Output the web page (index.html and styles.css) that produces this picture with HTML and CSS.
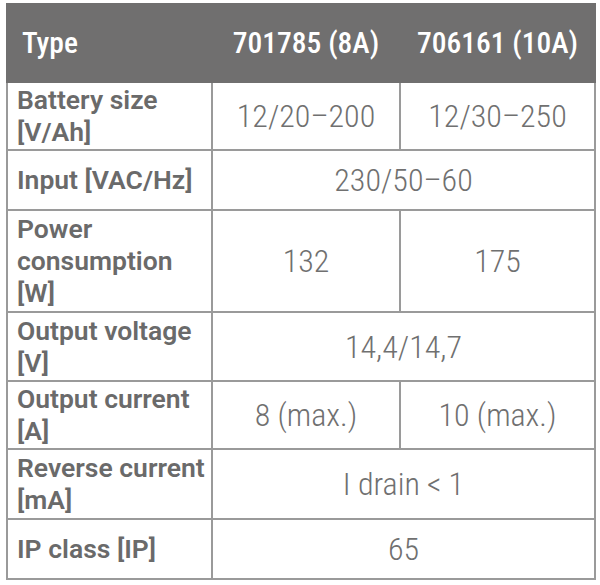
FILE: index.html
```html
<!DOCTYPE html>
<html>
<head>
<meta charset="utf-8">
<link rel="stylesheet" href="styles.css">
</head>
<body>
<table class="spec">
  <colgroup>
    <col class="c1"><col class="c2"><col class="c3">
  </colgroup>
  <thead>
    <tr class="r-head">
      <th class="lbl">Type</th>
      <th>701785 (8A)</th>
      <th>706161 (10A)</th>
    </tr>
  </thead>
  <tbody>
    <tr class="r-battery">
      <td class="lbl">Battery size<br>[V/Ah]</td>
      <td>12/20–200</td>
      <td>12/30–250</td>
    </tr>
    <tr class="r-input">
      <td class="lbl">Input [VAC/Hz]</td>
      <td colspan="2">230/50–60</td>
    </tr>
    <tr class="r-power">
      <td class="lbl">Power<br>consumption<br>[W]</td>
      <td>132</td>
      <td>175</td>
    </tr>
    <tr class="r-voltage">
      <td class="lbl">Output voltage<br>[V]</td>
      <td colspan="2">14,4/14,7</td>
    </tr>
    <tr class="r-current">
      <td class="lbl">Output current<br>[A]</td>
      <td>8 (max.)</td>
      <td>10 (max.)</td>
    </tr>
    <tr class="r-reverse">
      <td class="lbl">Reverse current<br>[mA]</td>
      <td colspan="2">I drain &lt; 1</td>
    </tr>
    <tr class="r-ip">
      <td class="lbl">IP class [IP]</td>
      <td colspan="2">65</td>
    </tr>
  </tbody>
</table>
</body>
</html>
```
FILE: styles.css
```css
html, body {
  margin: 0;
  padding: 0;
  background: #ffffff;
}
body {
  padding: 3px 0 0 6px;
}
.spec {
  border-collapse: collapse;
  table-layout: fixed;
  width: 588px;
  font-family: "Roboto", "Liberation Sans", sans-serif;
}
.c1 { width: 205px; }
.c2 { width: 188px; }
.c3 { width: 195px; }
.spec th {
  background: #706f6f;
  color: #ffffff;
  font-size: 29.5px;
  font-weight: 500;
  font-stretch: 87%;
  text-align: center;
  padding: 0;
  border: 2px solid #706f6f;
}
.spec th.lbl {
  text-align: left;
  padding-left: 14px;
}
.spec td {
  border: 2px solid #9a9a9a;
  color: #707070;
  font-size: 32px;
  font-weight: 350;
  font-stretch: 84%;
  text-align: center;
  vertical-align: middle;
  padding: 0;
  line-height: 32px;
}
.spec td.lbl {
  text-align: left;
  padding-left: 9px;
  font-size: 26.5px;
  font-weight: 600;
  font-stretch: 90%;
  color: #6a6a6a;
  line-height: 32px;
}
.r-head { height: 78px; }
.r-battery { height: 68px; }
.r-input { height: 60px; }
.r-power { height: 102px; }
.r-voltage { height: 69px; }
.r-current { height: 68px; }
.r-reverse { height: 70px; }
.r-ip { height: 60px; }
```
